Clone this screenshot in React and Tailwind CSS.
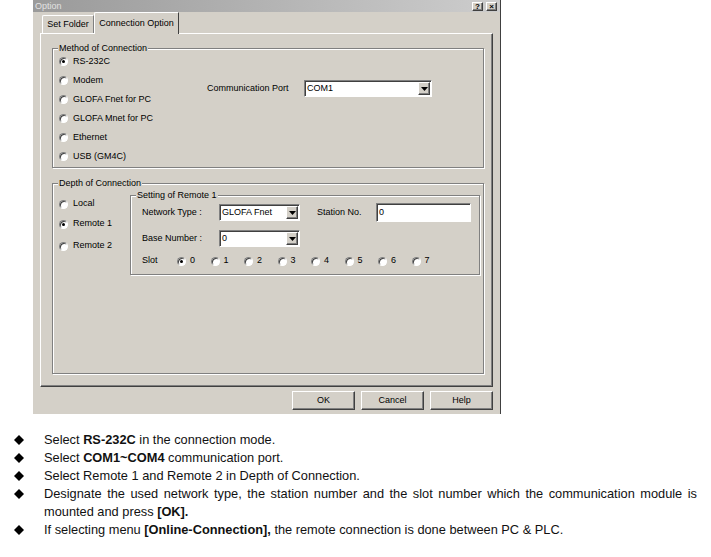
import React from 'react';

// raised / sunken 3D edges, Windows classic
const raised = 'border border-t-white border-l-white border-r-[#404040] border-b-[#404040] shadow-[inset_-1px_-1px_0_#808080]';
const sunken = 'border border-t-[#808080] border-l-[#808080] border-r-white border-b-white shadow-[inset_1px_1px_0_#404040]';
const etched = 'border border-[#808080] shadow-[inset_1px_1px_0_#ffffff,1px_1px_0_#ffffff]';

const Radio = ({ checked }) => (
  <span className={`inline-flex w-[9px] h-[9px] shrink-0 rounded-full bg-white items-center justify-center ${sunken}`}>
    {checked && <span className="w-[3px] h-[3px] rounded-full bg-black" />}
  </span>
);

const RadioRow = ({ label, checked, className = '' }) => (
  <div className={`flex items-center gap-[5px] whitespace-nowrap ${className}`}>
    <Radio checked={checked} />
    <span>{label}</span>
  </div>
);

const Select = ({ value, width }) => (
  <div className={`flex h-[17px] bg-white ${sunken} ${width}`}>
    <span className="flex-1 pl-[2px] text-[9px] leading-[15px]">{value}</span>
    <span className={`w-[12px] h-[13px] mt-[1px] mr-[1px] bg-[#d4d0c8] flex items-center justify-center ${raised}`}>
      <svg width="7" height="4" viewBox="0 0 7 4">
        <path d="M0 0h7L3.5 4z" fill="#000" />
      </svg>
    </span>
  </div>
);

const Group = ({ title, className = '', children }) => (
  <div className={`relative ${etched} ${className}`}>
    <span className="absolute left-[5px] -top-[7px] px-[1px] bg-[#d4d0c8] leading-[13px] whitespace-nowrap">{title}</span>
    {children}
  </div>
);

const Button = ({ children }) => (
  <button className={`w-[63px] h-[19px] bg-[#d4d0c8] text-[9px] leading-[15px] ${raised}`}>{children}</button>
);

const notes = [
  <>Select <b>RS-232C</b> in the connection mode.</>,
  <>Select <b>COM1~COM4</b> communication port.</>,
  <>Select Remote 1 and Remote 2 in Depth of Connection.</>,
  <>Designate the used network type, the station number and the slot number which the communication module is mounted and press <b>[OK].</b></>,
  <>If selecting menu <b>[Online-Connection],</b> the remote connection is done between PC &amp; PLC.</>,
];

const slots = [0, 1, 2, 3, 4, 5, 6, 7];

export default function App() {
  return (
    <div className="w-[711px] h-[557px] bg-white font-['Liberation_Sans',Arial,sans-serif] text-black overflow-hidden">
      {/* dialog */}
      <div className="ml-[33px] w-[468px] h-[414px] bg-[#d4d0c8] border-r border-[#404040] flex flex-col text-[9px]">
        <div className="h-[12px] flex items-center justify-between bg-gradient-to-r from-[#9a9a9a] to-[#cdcdcd]">
          <span className="pl-[2px] text-[9px] leading-[12px] text-[#e2e2e2]">Option</span>
          <div className="flex gap-[3px] pr-[3px]">
            <span className={`w-[11px] h-[9px] bg-[#d4d0c8] flex items-center justify-center text-[8px] font-bold leading-[7px] ${raised}`}>?</span>
            <span className={`w-[11px] h-[9px] bg-[#d4d0c8] flex items-center justify-center text-[8px] font-bold leading-[7px] ${raised}`}>×</span>
          </div>
        </div>

        <div className="px-[7px] flex flex-col">
          {/* tabs */}
          <div className="h-[21px] flex items-end pl-[2px] whitespace-nowrap">
            <div className="h-[18px] w-[52px] border-t border-l border-white border-r border-r-[#808080] rounded-tl-[2px] flex items-center justify-center leading-[13px]">
              Set Folder
            </div>
            <div className="relative z-10 -mb-px h-[22px] w-[85px] bg-[#d4d0c8] border-t border-l border-white border-r border-r-[#404040] rounded-tl-[2px] flex items-start pt-[4px] justify-center leading-[13px]">
              Connection Option
            </div>
          </div>

          {/* tab panel */}
          <div className={`h-[354px] pl-[11px] pt-[14px] flex flex-col ${raised}`}>
            <Group title="Method of Connection" className="w-[432px] h-[120px] flex">
              <div className="w-[154px] pl-[6px] pt-[3px] flex flex-col">
                <RadioRow label="RS-232C" checked className="h-[19px]" />
                <RadioRow label="Modem" className="h-[19px]" />
                <RadioRow label="GLOFA Fnet for PC" className="h-[19px]" />
                <RadioRow label="GLOFA Mnet for PC" className="h-[19px]" />
                <RadioRow label="Ethernet" className="h-[19px]" />
                <RadioRow label="USB (GM4C)" className="h-[19px]" />
              </div>
              <div className="mt-[31px] h-[17px] flex items-center whitespace-nowrap">
                <span className="w-[97px]">Communication Port</span>
                <Select value="COM1" width="w-[128px]" />
              </div>
            </Group>

            <Group title="Depth of Connection" className="mt-[15px] w-[432px] h-[191px] flex">
              <div className="w-[77px] pl-[6px] flex flex-col">
                <RadioRow label="Local" className="mt-[12px] h-[16px]" />
                <RadioRow label="Remote 1" checked className="mt-[4px] h-[16px]" />
                <RadioRow label="Remote 2" className="mt-[6px] h-[16px]" />
              </div>
              <Group title="Setting of Remote 1" className="mt-[11px] w-[350px] h-[80px] pl-[11px] flex flex-col">
                <div className="mt-[7px] h-[19px] flex items-center whitespace-nowrap">
                  <span className="w-[77px]">Network Type :</span>
                  <Select value="GLOFA Fnet" width="w-[81px]" />
                  <span className="ml-[17px] w-[59px]">Station No.</span>
                  <div className={`w-[95px] h-[19px] bg-white pl-[2px] text-[9px] leading-[17px] ${sunken}`}>0</div>
                </div>
                <div className="mt-[7px] h-[19px] flex items-center whitespace-nowrap">
                  <span className="w-[77px]">Base Number :</span>
                  <Select value="0" width="w-[81px]" />
                </div>
                <div className="mt-[6px] h-[14px] flex items-center">
                  <span className="w-[35px]">Slot</span>
                  {slots.map(n => (
                    <div key={n} className="w-[33.5px] flex items-center gap-[4px]">
                      <Radio checked={n === 0} />
                      <span>{n}</span>
                    </div>
                  ))}
                </div>
              </Group>
            </Group>
          </div>

          <div className="mt-[4px] flex justify-end gap-[6px]">
            <Button>OK</Button>
            <Button>Cancel</Button>
            <Button>Help</Button>
          </div>
        </div>
      </div>

      {/* notes */}
      <ul className="mt-[17px] flex flex-col text-[12.8px] leading-[18px] text-[#111]">
        {notes.map((n, i) => (
          <li key={i} className="flex">
            <span className="w-[44px] pl-[14px] h-[18px] flex items-center shrink-0">
              <svg width="10" height="10" viewBox="0 0 10 10">
                <path d="M5 0L10 5L5 10L0 5z" fill="#000" />
              </svg>
            </span>
            <span className="w-[653px] text-justify">{n}</span>
          </li>
        ))}
      </ul>
    </div>
  );
}
